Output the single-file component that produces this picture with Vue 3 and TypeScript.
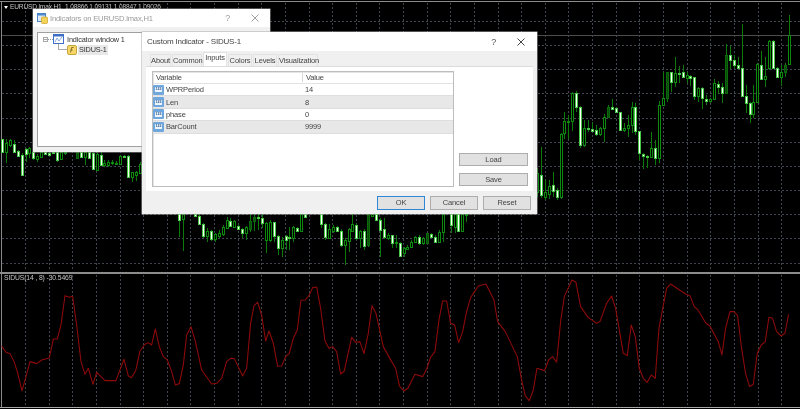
<script setup lang="ts">
type Kind = 'w' | 'g' | 'd'
type Raw = [number, number, number, number, number, Kind]
interface Candle { key: string; x: number; wy1: number; wy2: number; by: number; bh: number; kind: Kind }

const right: Raw[] = [
  [21,505,590,520,575,'g'],[33,440,595,525,585,'w'],[45,540,600,575,590,'g'],[57,540,598,558,582,'g'],[68,515,590,556,572,'w'],[80,565,600,570,590,'w'],[92,400,596,402,592,'g'],[103,337,417,364,400,'g'],[115,345,418,363,365,'g'],[127,275,392,280,364,'g'],[139,272,335,280,320,'w'],[151,318,445,320,434,'w'],[163,360,440,385,434,'g'],[175,360,397,384,388,'w'],[187,365,395,388,392,'w'],[198,375,407,389,403,'w'],[210,380,408,385,403,'g'],[222,342,425,350,385,'g'],[233,315,352,322,350,'d'],[245,297,328,322,326,'w'],[257,322,338,325,336,'w'],[269,335,392,337,390,'w'],[281,370,397,385,390,'g'],[293,345,410,376,385,'g'],[305,307,400,320,376,'g'],[316,310,405,322,393,'w'],[328,392,480,393,460,'w'],[340,460,507,462,467,'w'],[352,465,505,468,471,'w'],[364,397,475,445,472,'g'],[375,420,495,445,473,'w'],[388,303,488,315,473,'g'],[399,215,318,295,315,'g'],[411,215,305,215,295,'d'],[423,215,275,215,247,'w'],[435,172,262,220,247,'g'],[447,197,250,218,222,'w'],[458,195,233,217,231,'w'],[470,215,250,226,233,'g'],[481,226,258,228,233,'w'],[493,230,300,232,287,'w'],[505,260,305,265,287,'g'],[517,260,327,263,295,'w'],[529,285,315,296,304,'w'],[541,293,310,297,304,'g'],[553,237,300,250,298,'g'],[564,243,283,252,260,'w'],[576,250,310,260,280,'w'],[588,132,282,165,280,'d'],[600,138,207,165,180,'w'],[612,165,205,180,195,'w'],[623,170,208,195,205,'w'],[635,72,290,205,288,'w'],[647,255,340,288,310,'w'],[659,305,368,310,342,'w'],[670,255,355,305,342,'g'],[682,190,307,193,305,'g'],[694,153,240,195,238,'w'],[706,172,260,227,238,'g'],[718,120,210,122,205,'g'],[730,120,208,122,205,'w'],[741,200,235,205,230,'w'],[753,195,257,215,230,'g'],[765,190,232,195,215,'d'],[776,45,195,105,193,'g'],
]
const middle: Raw[] = [
  [118,42,110,42,60,'w'],[130,42,152,42,58,'g'],[165,42,50,42,48,'w'],[177,42,75,48,73,'w'],[188,70,115,72,107,'w'],[200,85,125,93,107,'g'],[212,90,123,93,118,'w'],[224,100,125,103,118,'g'],[236,90,115,100,107,'g'],[248,75,108,82,103,'g'],[260,52,88,60,85,'g'],[271,55,82,62,78,'w'],[283,60,82,62,80,'g'],[295,75,90,78,87,'w'],[307,85,115,87,100,'w'],[319,78,120,82,98,'g'],[331,42,95,62,88,'d'],[342,42,92,52,62,'d'],[354,42,90,50,55,'w'],[365,42,85,55,70,'w'],[377,65,160,68,120,'g'],[389,60,125,67,120,'g'],[401,65,125,67,108,'w'],[413,105,165,108,143,'w'],[425,110,170,120,145,'g'],[437,105,150,108,120,'w'],[448,80,150,110,115,'w'],[460,78,125,80,115,'g'],[472,80,95,83,92,'w'],[483,42,95,42,93,'g'],[495,42,55,42,52,'w'],[542,42,85,42,72,'w'],[554,70,120,72,112,'w'],[566,72,118,88,115,'g'],[578,75,100,80,92,'g'],[590,77,95,80,92,'w'],[602,88,140,92,135,'w'],[614,115,195,120,135,'g'],[626,85,155,88,122,'g'],[637,42,95,72,92,'g'],[649,70,120,74,115,'w'],[661,90,145,92,115,'g'],[673,88,150,92,138,'w'],[685,42,140,45,135,'d'],[697,42,50,42,48,'g'],[708,42,62,42,60,'w'],[720,55,170,60,90,'w'],[732,55,118,88,110,'w'],[744,100,120,105,115,'g'],[755,105,145,106,130,'w'],[767,105,145,127,129,'g'],[779,125,170,128,167,'w'],[791,140,170,145,158,'g'],[802,135,150,140,146,'g'],[814,120,145,125,142,'g'],[826,108,130,112,125,'g'],[838,105,135,110,128,'w'],[850,112,135,115,130,'g'],[862,98,132,100,128,'d'],[873,98,112,102,110,'w'],[885,105,130,110,126,'w'],[897,90,130,95,126,'g'],[909,42,125,42,95,'g'],[932,42,100,42,75,'w'],[944,42,100,42,80,'g'],[955,42,94,42,92,'w'],[967,42,94,42,92,'g'],[979,42,65,42,44,'g'],
]
const left: Raw[] = [
  [7,28,67,28,65,'w'],[19,28,100,40,65,'g'],[30,28,50,30,44,'g'],[42,30,70,42,65,'w'],[54,60,80,62,78,'w'],[65,70,137,75,135,'w'],[77,55,95,57,72,'w'],[88,50,85,55,68,'g'],[100,65,90,65,85,'w'],[112,72,97,78,88,'g'],[124,65,82,65,80,'g'],[136,65,74,65,72,'w'],[148,65,77,68,75,'w'],[160,65,72,65,70,'w'],[171,65,95,65,90,'w'],[183,65,90,65,88,'g'],[195,65,75,65,68,'g'],[230,65,87,65,85,'d'],[242,65,85,65,82,'w'],[254,65,105,65,80,'g'],[266,65,87,65,85,'w'],[278,65,120,68,118,'w'],[290,65,122,72,120,'g'],[302,65,107,75,105,'w'],[313,90,112,98,105,'g'],[325,90,112,95,105,'g'],[337,90,105,96,100,'g'],[349,92,106,98,100,'g'],[361,75,105,78,102,'g'],[372,75,84,78,80,'w'],[384,75,143,78,140,'w'],[396,125,155,125,140,'g'],[408,122,152,125,135,'g'],[419,95,130,102,128,'g'],
]

function place(group: Raw[], ox: number, oy: number, name: string): Candle[] {
  return group.map((r, i) => {
    const y1 = Math.round(oy + r[3] / 3)
    const y2 = Math.round(oy + r[4] / 3)
    return {
      key: name + i,
      x: Math.round(ox + r[0] / 3),
      wy1: Math.round(oy + r[1] / 3),
      wy2: Math.round(oy + r[2] / 3),
      by: y1,
      bh: Math.max(y2 - y1, 1),
      kind: r[5],
    }
  })
}
const candles: Candle[] = [
  ...place(left, 0, 130, 'l'),
  ...place(middle, 140, 200, 'm'),
  ...place(right, 530, 0, 'r'),
]

const vLines: number[] = Array.from({ length: 33 }, (_, i) => Math.round(25 + i * 23.63) + 0.5)
const hLines: number[] = Array.from({ length: 11 }, (_, i) => Math.round(21 + i * 24.15) + 0.5)

const redA = '5,243 18,262 30,266 42,290 52,320 66,378 78,335 90,290 110,296 125,285 148,279 160,222 172,222 183,180 195,92 208,97 218,94 230,180 243,290 255,328 265,310 279,358 290,322 315,347 348,347 372,283 385,333 394,338 407,318 420,258 435,238 445,233 455,240 466,192 478,245 490,275 502,285 515,320 526,360 538,356 550,300 560,210 573,185 585,225 605,315 635,357 650,355 665,340 680,290 692,280 703,281 728,333 740,310 752,175 762,122 773,112 785,150 797,228 807,198 820,235 833,304 845,303 857,275 868,265 880,220 892,195 903,106 916,105 928,90 938,68 950,66 962,130 975,228 987,250 998,245 1010,260 1022,327 1033,318 1055,217 1067,232 1080,230 1092,266 1105,205 1116,122 1128,145 1150,245 1175,290 1187,310 1199,365'
const redB = '0,365 12,378 24,370 45,328 68,335 80,312 92,277 105,260 117,165 128,108 140,108 152,175 164,180 176,233 188,200 200,140 212,98 235,63 258,57 282,105 293,170 316,200 352,275 365,345 376,393 388,407 400,375 411,310 434,317 446,285 458,275 470,292 482,170 493,95 516,45 528,52 542,125 565,158 590,175 600,170 620,115 635,93 647,130 659,200 670,265 682,272 694,180 706,215 718,310 730,340 742,352 754,330 766,340 777,190 800,70 812,57 858,88 870,92 883,125 894,135 918,175 930,183 955,230 966,270 977,190 990,140 1002,140 1013,152 1025,250 1037,325 1049,365 1060,358 1072,265 1084,240 1096,230 1107,157 1118,160 1130,200 1143,213 1155,205 1166,148'

const tabs: { label: string; width: number }[] = [
  { label: 'About', width: 21 },
  { label: 'Common', width: 30 },
  { label: 'Inputs', width: 24 },
  { label: 'Colors', width: 24 },
  { label: 'Levels', width: 24 },
  { label: 'Visualization', width: 40 },
]
const rows: { name: string; value: string }[] = [
  { name: 'WPRPeriod', value: '14' },
  { name: 'Len', value: '8' },
  { name: 'phase', value: '0' },
  { name: 'BarCount', value: '9999' },
]
</script>

<template>
  <div class="page">
    <svg class="chart" width="800" height="409" viewBox="0 0 800 409">
      <g class="grid">
        <line v-for="x in vLines" :key="'v' + x" :x1="x" :x2="x" y1="3" y2="271" />
        <line v-for="x in vLines" :key="'w' + x" :x1="x" :x2="x" y1="275" y2="407" />
        <line v-for="y in hLines" :key="'h' + y" x1="2" x2="800" :y1="y" :y2="y" />
      </g>
      <line class="frame" x1="0" x2="800" y1="1.5" y2="1.5" />
      <line class="frame" x1="1.5" x2="1.5" y1="1" y2="408" />
      <line class="price" x1="2" x2="800" y1="35.5" y2="35.5" />
      <rect class="sep" x="0" y="272" width="800" height="2" />
      <line class="frame bottom" x1="0" x2="800" y1="407.5" y2="407.5" />
      <g v-for="c in candles" :key="c.key">
        <line class="wick" :x1="c.x + 0.5" :x2="c.x + 0.5" :y1="c.wy1" :y2="c.wy2" />
        <rect :class="['body', c.kind]" :x="c.x - 0.5" :y="c.by + 0.5" width="2" :height="c.bh" />
      </g>
      <g transform="scale(0.3333)" class="red">
        <polyline :points="redA" transform="translate(0,795)" />
        <polyline :points="redB" transform="translate(1200,795)" />
      </g>
    </svg>

    <div class="legend top-legend"><span class="tri"></span>EURUSD.lmax,H1&nbsp; 1.08866 1.09131 1.08847 1.09026</div>
    <div class="legend sub-legend">SIDUS(14 , 8) -30.5469</div>

    <section class="win back">
      <header class="back-title">
        <svg class="ttl-icon" width="11" height="11" viewBox="0 0 11 11">
          <rect x="0.5" y="0.5" width="8" height="8" fill="#dbe9f8" stroke="#4a86c8" />
          <rect x="0.5" y="0.5" width="8" height="2" fill="#4a86c8" />
          <rect x="4.5" y="4" width="6" height="6.5" rx="1" fill="#f3d35a" stroke="#c9a227" stroke-width=".7" />
        </svg>
        <span class="back-name">Indicators on EURUSD.lmax,H1</span>
        <span class="help dim">?</span>
        <svg class="close" width="8" height="8" viewBox="0 0 8 8"><path d="M.5.5l7 7M7.5.5l-7 7" stroke="#a0a0a0" fill="none" /></svg>
      </header>
      <div class="back-body">
        <div class="tree">
          <div class="tree-row first">
            <span class="minus"></span>
            <span class="dash"></span>
            <svg width="11" height="10" viewBox="0 0 11 10">
              <rect x=".5" y=".5" width="10" height="9" fill="#fff" stroke="#3f6fc6" />
              <rect x=".5" y=".5" width="10" height="2" fill="#3f6fc6" />
              <path d="M2 8l2-4 2 3 3-4" fill="none" stroke="#6d93d8" stroke-width=".8" />
            </svg>
            <span class="tree-label">Indicator window 1</span>
          </div>
          <div class="tree-row second">
            <span class="elbow"></span>
            <svg width="10" height="10" viewBox="0 0 10 10">
              <rect x=".5" y=".5" width="9" height="9" rx="1.5" fill="#f5d76a" stroke="#c8a53a" />
              <path d="M3.5 7.5l1.2-5h2M3.6 5h2" fill="none" stroke="#6b5a1c" stroke-width=".8" />
            </svg>
            <span class="tree-label picked">SIDUS-1</span>
          </div>
        </div>
      </div>
    </section>

    <section class="win front">
      <header class="front-title">
        <span class="front-name">Custom Indicator - SIDUS-1</span>
        <span class="help">?</span>
        <svg class="close" width="8" height="8" viewBox="0 0 8 8"><path d="M.5.5l7 7M7.5.5l-7 7" stroke="#444" fill="none" /></svg>
      </header>
      <div class="tab-strip">
        <span
          v-for="t in tabs"
          :key="t.label"
          :class="['tab', { active: t.label === 'Inputs' }]"
          :style="{ width: t.width + 'px' }"
        >{{ t.label }}</span>
      </div>
      <div class="pane">
        <div class="table">
          <div class="thead">
            <span class="th first-col">Variable</span>
            <span class="th">Value</span>
          </div>
          <div v-for="(r, i) in rows" :key="r.name" :class="['row', { odd: i % 2 === 1 }]">
            <span class="cell name">
              <span class="badge"><span class="badge-in">123</span></span>{{ r.name }}
            </span>
            <span class="cell val">{{ r.value }}</span>
          </div>
        </div>
        <div class="side">
          <button class="btn side-btn">Load</button>
          <button class="btn side-btn">Save</button>
        </div>
      </div>
      <footer class="actions">
        <button class="btn act default">OK</button>
        <button class="btn act">Cancel</button>
        <button class="btn act">Reset</button>
      </footer>
    </section>
  </div>
</template>

<style>
html, body { margin: 0; background: #000; overflow: hidden; }
</style>

<style scoped>
.page {
  position: relative;
  width: 800px;
  height: 409px;
  background: #000;
  overflow: hidden;
  font-family: "Liberation Sans", Arial, sans-serif;
  filter: blur(0.35px);
}
.chart { position: absolute; inset: 0; display: block; }
.grid line { stroke: #3f4650; stroke-width: 1; stroke-dasharray: 2 2; }
.frame { stroke: #8a8a8a; stroke-width: 1; }
.bottom { stroke: #a8a8a8; }
.price { stroke: #4c4c4c; stroke-width: 1; }
.sep { fill: #8c8c8c; }
.wick { stroke: #0b7a0b; stroke-width: 1; }
.body { stroke: #0d8a0d; stroke-width: 1; }
.body.w { fill: #fff; stroke: #46c846; }
.body.g { fill: #000; }
.body.d { fill: #0a4a0a; stroke: #0a6a0a; }
.red polyline { fill: none; stroke: #8f0a0a; stroke-width: 3.2; stroke-linejoin: round; }

.legend {
  position: absolute;
  color: #c4c4c4;
  white-space: nowrap;
  line-height: 8px;
}
.top-legend { left: 4px; top: 3px; font-size: 6.6px; letter-spacing: -0.16px; display: flex; align-items: center; }
.tri {
  width: 0; height: 0; margin-right: 2px;
  border-left: 2.5px solid transparent;
  border-right: 2.5px solid transparent;
  border-top: 3px solid #fff;
}
.sub-legend { left: 4px; top: 274px; font-size: 6.8px; letter-spacing: -0.12px; }

.win { position: absolute; display: flex; flex-direction: column; box-sizing: border-box; }
.back { left: 33px; top: 9px; width: 237px; height: 143px; background: #f0f0f0; box-shadow: 0 0 0 .5px #999; }
.back-title {
  height: 18px; flex: none; background: #fff; display: flex; align-items: center;
  padding: 0 11px 0 4px; font-size: 7.6px; letter-spacing: -0.17px; color: #999;
}
.ttl-icon { margin-right: 2px; }
.back-name { flex: 1; }
.help { font-size: 9px; color: #555; margin-right: 21px; }
.help.dim { color: #a0a0a0; }
.close { display: block; }
.back-body { flex: 1; padding: 5px 4px 5px 4px; display: flex; min-height: 0; }
.tree {
  flex: 1; background: #fff; border: 1px solid #9f9f9f; box-sizing: border-box;
  padding: 1px 0 0 5px; font-size: 7.3px; letter-spacing: -0.15px; color: #333;
}
.tree-row { display: flex; align-items: center; height: 10.5px; }
.first svg { margin-right: 3px; }
.minus { width: 5px; height: 5px; border: 1px solid #aaa; box-sizing: border-box; background: linear-gradient(#aaa,#aaa) center/3px 1px no-repeat; }
.dash { width: 5px; border-top: 1px dotted #999; }
.second { padding-left: 15px; }
.elbow { width: 9px; height: 6px; margin-top: -6px; border-left: 1px solid #aaa; border-bottom: 1px solid #aaa; box-sizing: border-box; }
.picked { background: #e8e8e8; margin-left: 1px; padding: 0 1px; height: 10px; line-height: 10px; }

.front { left: 142px; top: 32px; width: 395px; height: 182px; background: #f0f0f0; box-shadow: 0 0 0 .5px #aaa; }
.front-title {
  height: 19px; flex: none; background: #fff; display: flex; align-items: center;
  padding: 0 12px 0 5px; font-size: 8px; letter-spacing: -0.2px; color: #444;
}
.front-name { flex: 1; }
.tab-strip {
  flex: none; height: 15px; background: #f0f0f0; display: flex; align-items: flex-end;
  padding: 0 0 0 8px; gap: 1px; font-size: 7.5px; letter-spacing: -0.15px; color: #444;
}
.tab {
  height: 12px; line-height: 11px; background: #f0f0f0;
  border: 1px solid #e2e2e2; border-bottom: 0; box-sizing: border-box;
  display: block; white-space: nowrap; text-align: center;
}
.tab.active { height: 14px; line-height: 10px; background: #fff; }
.pane {
  flex: none; margin: 0 4px 0 4px; height: 125px; background: #fff;
  padding: 4px 5px 4px 6px; box-sizing: border-box; display: flex;
  border-top: 1px solid #dcdcdc;
}
.table {
  width: 302px; flex: none; border: 1px solid #bdbdbd; box-sizing: border-box;
  background: #fff; font-size: 7.5px; letter-spacing: -0.15px; color: #444;
  box-shadow: inset 1px 1px 0 #e5e5e5;
}
.thead { display: grid; grid-template-columns: 150px 1fr; height: 11px; align-items: center; border-bottom: 1px solid #e2e2e2; }
.th { padding-left: 3px; }
.first-col { border-right: 1px solid #d8d8d8; }
.row { display: grid; grid-template-columns: 150px 1fr; height: 12.4px; align-items: center; border-bottom: 1px solid #dedede; box-sizing: border-box; }
.row.odd { background: #e8e8e8; }
.cell { display: flex; align-items: center; white-space: nowrap; }
.val { padding-left: 2px; }
.badge {
  width: 11px; height: 10px; margin-right: 2px; background: #6fa6dc; border-radius: 1px;
  display: flex; align-items: center; justify-content: center; flex: none;
}
.badge-in { font-size: 3.6px; line-height: 5px; letter-spacing: 0; background: #eef5fc; color: #1b4f8a; padding: 0 .5px; font-weight: 700; }
.side { flex: 1; display: flex; flex-direction: column; justify-content: flex-end; gap: 7px; padding: 0 0 1px 5px; }
.btn {
  font-family: inherit; font-size: 7.5px; letter-spacing: -0.1px; color: #444; background: #e1e1e1;
  border: 1px solid #adadad; padding: 0; margin: 0; box-sizing: border-box; display: block;
}
.side-btn { width: 69px; height: 13px; }
.actions { flex: 1; display: flex; justify-content: flex-end; align-items: center; gap: 5px; padding: 0 6px 0 0; }
.act { width: 48px; height: 14px; }
.default { border: 1.5px solid #2f86d4; }
</style>
